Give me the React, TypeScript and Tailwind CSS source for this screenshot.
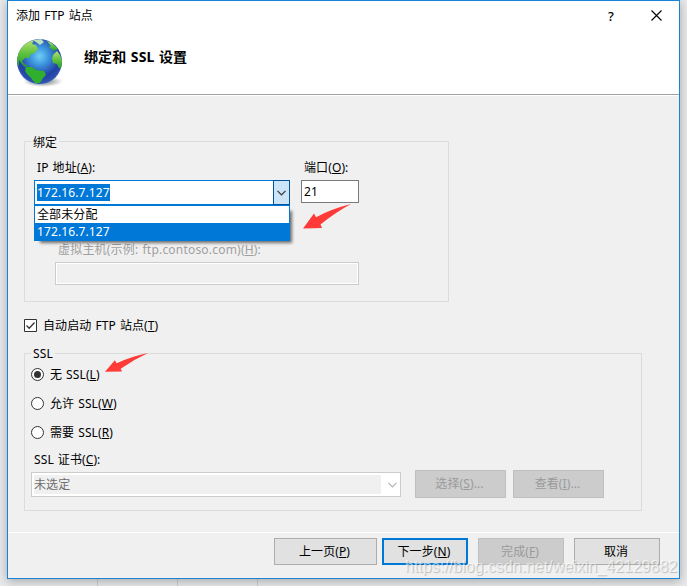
import type { ReactNode } from "react";

const ui = "font-['Noto_Sans','Noto_Sans_CJK_SC',sans-serif]";

function Key({ k }: { k: string }) {
  return (
    <>
      (<span className="underline underline-offset-1">{k}</span>)
    </>
  );
}

function Button({ className = "", disabled = false, primary = false, children }: { className?: string; disabled?: boolean; primary?: boolean; children: ReactNode }) {
  const tone = disabled
    ? "border border-[#bfbfbf] bg-[#cccccc] text-[#9a9a9a]"
    : primary
      ? "border-2 border-[#0078d7] bg-[#e1e1e1]"
      : "border border-[#adadad] bg-[#e1e1e1]";
  return <button className={`flex shrink-0 items-center justify-center whitespace-nowrap pr-0.5 ${tone} ${className}`}>{children}</button>;
}

function Radio({ checked = false, children }: { checked?: boolean; children: ReactNode }) {
  return (
    <label className="flex h-[29px] items-center gap-1.5">
      <span className="flex size-[13px] items-center justify-center rounded-full border border-[#333] bg-white">
        {checked && <span className="size-[7px] rounded-full bg-[#333]" />}
      </span>
      <span>{children}</span>
    </label>
  );
}

function Chevron({ className }: { className: string }) {
  return (
    <svg viewBox="0 0 9 6" className={`h-[6px] w-[9px] ${className}`} fill="none" stroke="currentColor" strokeWidth="1.2">
      <path d="M.5 .8 4.5 4.8 8.5 .8" />
    </svg>
  );
}

function Globe() {
  return (
    <svg viewBox="0 0 50 52" className="h-[52px] w-[50px]">
      <defs>
        <radialGradient id="sea" cx="50%" cy="38%" r="60%">
          <stop offset="0" stopColor="#6fd0f5" />
          <stop offset=".35" stopColor="#3b92dc" />
          <stop offset=".75" stopColor="#2340a4" />
          <stop offset="1" stopColor="#2f55b0" />
        </radialGradient>
        <linearGradient id="land" x1="0" y1="0" x2="0" y2="1">
          <stop offset="0" stopColor="#b4e070" />
          <stop offset=".5" stopColor="#5fc23e" />
          <stop offset="1" stopColor="#249b2b" />
        </linearGradient>
        <radialGradient id="shade">
          <stop offset="0" stopColor="#333" stopOpacity=".75" />
          <stop offset="1" stopColor="#555" stopOpacity="0" />
        </radialGradient>
        <clipPath id="disc"><circle cx="23.5" cy="23.5" r="22.5" /></clipPath>
      </defs>
      <ellipse cx="27" cy="43.5" rx="20" ry="5.5" fill="url(#shade)" />
      <circle cx="23.5" cy="23.5" r="22.5" fill="url(#sea)" />
      <g clipPath="url(#disc)" fill="url(#land)">
        <path d="M0 25 2 13 9 5 18 2 16 6 20 7 22 11 19 15 15 16 13 20 9 20 6 23 8 26 12 28 9 29 5 25 3 22 3 28Z" />
        <path d="M17 2 25 1 28 4 24 7 20 4Z" fill="#b9dfbd" />
        <path d="M31 3 36 5 42 11 38 13 33 9 35 8Z" />
        <path d="M37 17 41 13 44 17 47 25 45 31 42 29 41 26 37 25 36 21Z" />
        <path d="M10 29 16 29 20 32 28 33 30 37 27 40 24 45 19 45 15 40 11 36 9 33Z" fill="#2faf2d" />
      </g>
      <path d="M4 35A22 22 0 0 0 43 35" fill="none" stroke="#7fb0e8" strokeOpacity=".4" strokeWidth="1" />
    </svg>
  );
}

function Arrow({ className }: { className: string }) {
  return (
    <svg viewBox="0 0 48 26" className={`absolute ${className}`} preserveAspectRatio="none" fill="#ff3b38">
      <path d="M0 24.5 11 9.5 13 13.3 Q28 5 48 0 Q33 8 17.5 20.5 L19 24Z" />
    </svg>
  );
}

export default function App() {
  return (
    <div className={`relative h-[586px] w-[687px] overflow-hidden bg-[#e9eaec] pl-[7px] text-[12px] leading-4 tracking-[0.1px] text-black [word-spacing:0.8px] ${ui}`}>
      <div className="absolute bottom-0 left-[97px] flex h-2 gap-[79px]">
        <i className="w-px bg-[#cbd0d6]" />
        <i className="w-px bg-[#cbd0d6]" />
        <i className="w-px bg-[#cbd0d6]" />
      </div>
      <main className="relative flex h-[579px] w-[673px] flex-col border border-[#1883d7] bg-[#f0f0f0] shadow-[0_2px_10px_rgba(0,0,0,0.3)]">
        <header className="h-[93px] shrink-0 bg-white">
          <div className="flex h-[29px] items-center pl-2">
            <span>添加 FTP 站点</span>
            <span className="ml-auto mr-[37px] text-[13px] font-medium">?</span>
            <svg viewBox="0 0 11 11" className="mr-[17px] size-[11px]" stroke="#000" strokeWidth="1.1"><path d="M.5 .5 10.5 10.5M10.5 .5 .5 10.5" /></svg>
          </div>
          <div className="flex pl-2">
            <div className="mt-[8px]"><Globe /></div>
            <h1 className="ml-[18px] mt-[19px] text-[14px] font-bold leading-4">绑定和 SSL 设置</h1>
          </div>
        </header>
        <div className="h-[2px] shrink-0 border-t border-[#a0a0a0] bg-white" />

        <section className="h-[436px] shrink-0 pl-4 pt-[38px]">
          <fieldset className="h-[168px] w-[425px] border border-[#dcdcdc]">
            <legend className="ml-[6px] h-[15px] px-[2px] leading-[17px]">绑定</legend>
            <div className="flex pl-[9px] pt-[11px]">
              <div className="relative w-[267px]">
                <div className="ml-[3px] h-5">IP 地址<Key k="A" />:</div>
                <div className="flex h-[25px] w-[256px] border border-[#0078d7] bg-white">
                  <div className="flex flex-1 items-center pl-[2px]"><span className="h-[17px] bg-[#0078d7] leading-[17px] text-white">172.16.7.127</span></div>
                  <div className="-my-px -mr-px flex w-[17px] items-center justify-center border border-[#005499] bg-[#cce4f7]"><Chevron className="text-[#333]" /></div>
                </div>
                <div className="absolute left-0 top-[45px] z-10 h-[36px] w-[256px] border border-[#0078d7] bg-white shadow-[4px_4px_3px_-2px_rgba(0,0,0,0.55)]">
                  <div className="h-[17px] pl-[2px] leading-[17px]">全部未分配</div>
                  <div className="h-[17px] bg-[#0078d7] pl-[2px] leading-[17px] text-white">172.16.7.127</div>
                </div>
              </div>
              <div>
                <div className="ml-[3px] h-5">端口<Key k="O" />:</div>
                <div className="flex h-[23px] w-[58px] items-center border border-[#7a7a7a] bg-white pl-[2px]">21</div>
              </div>
            </div>
            <div className="ml-[30px] mt-[37px] text-[#a0a0a0]">
              <div className="ml-[3px] h-5 whitespace-nowrap tracking-[0.2px]">虚拟主机(示例: ftp.contoso.com)<Key k="H" />:</div>
              <div className="h-[23px] w-[304px] border border-[#ccc] bg-[#f0f0f0] shadow-[inset_0_0_0_1px_#fff]" />
            </div>
          </fieldset>

          <label className="mt-[16px] flex h-4 items-start gap-1.5">
            <svg viewBox="0 0 13 13" className="mt-px size-[13px]" fill="#fff" stroke="#333"><path d="M.5 .5h12v12H.5Z" /><path d="M2.5 6.5 5.2 9.2 10.5 3.5" fill="none" strokeWidth="1.3" /></svg>
            <span>自动启动 FTP 站点<Key k="T" /></span>
          </label>

          <fieldset className="mt-[12px] h-[165px] w-[618px] border border-[#dcdcdc]">
            <legend className="ml-[6px] h-[15px] px-[2px] leading-[15px]">SSL</legend>
            <div className="-mt-px pl-[6px]">
              <Radio checked>无 SSL<Key k="L" /></Radio>
              <Radio>允许 SSL<Key k="W" /></Radio>
              <Radio>需要 SSL<Key k="R" /></Radio>
              <div className="ml-[3px] mt-[5px] leading-4">SSL 证书<Key k="C" />:</div>
              <div className="mt-[2px] flex items-start">
                <div className="mt-[2px] flex h-[25px] w-[370px] border border-[#ccc] bg-white p-[2px]">
                  <div className="w-[347px] shrink-0 bg-[#f0f0f0] leading-[19px] text-[#6d6d6d]">未选定</div>
                  <div className="flex flex-1 items-center justify-end pr-px"><Chevron className="text-[#b5b5b5]" /></div>
                </div>
                <Button disabled className="ml-[14px] h-[28px] w-[91px]">选择<Key k="S" />...</Button>
                <Button disabled className="ml-[7px] h-[28px] w-[91px]">查看<Key k="I" />...</Button>
              </div>
            </div>
          </fieldset>
        </section>

        <footer className="flex flex-1 border-t border-white pl-[266px] pt-[5px]">
          <Button className="h-[27px] w-[103px]">上一页<Key k="P" /></Button>
          <Button primary className="ml-[5px] h-[27px] w-[86px]">下一步<Key k="N" /></Button>
          <Button disabled className="ml-[10px] h-[27px] w-[86px]">完成<Key k="F" /></Button>
          <Button className="ml-[10px] h-[27px] w-[86px]">取消</Button>
        </footer>
      </main>
      <Arrow className="left-[303px] top-[204px] h-[26px] w-[48px]" />
      <Arrow className="left-[105px] top-[353px] h-[20px] w-[43px]" />
      <div className="absolute left-[405px] top-[557px] whitespace-nowrap font-['Liberation_Sans',sans-serif] text-[16px] leading-5 tracking-normal text-white/60 [text-shadow:1px_1px_1px_rgba(0,0,0,0.22)]">https://blog.csdn.net/weixin_42129882</div>
    </div>
  );
}
